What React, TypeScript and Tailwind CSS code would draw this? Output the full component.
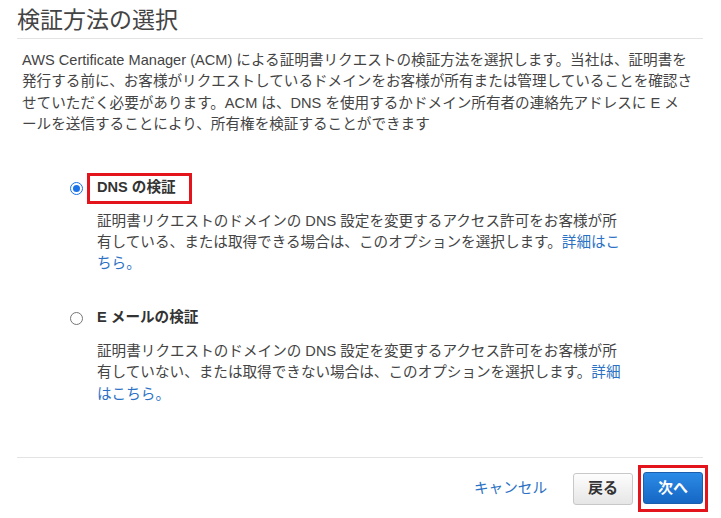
import React from "react";

const FONT = '"Liberation Sans", "Noto Sans CJK JP", sans-serif';

function Radio({ checked }: { checked: boolean }) {
  return checked ? (
    <span className="flex h-[13px] w-[13px] shrink-0 items-center justify-center rounded-full border-[1.5px] border-[#1a73e8] bg-white">
      <span className="h-[7px] w-[7px] rounded-full bg-[#1a73e8]" />
    </span>
  ) : (
    <span className="h-[13px] w-[13px] shrink-0 rounded-full border border-[#767676] bg-white" />
  );
}

export default function App() {
  return (
    <div
      className="flex h-[518px] w-[721px] flex-col overflow-hidden bg-white text-[#444]"
      style={{ fontFamily: FONT }}
    >
      <div className="flex flex-col pl-[17px] pr-[18px] pt-[6px]">
        <h1 className="text-[23px] font-normal leading-[28px] text-[#444]">検証方法の選択</h1>
        <div className="mt-[4px] h-px bg-[#e3e3e3]" />
        <p className="mt-[11px] whitespace-nowrap pl-[5px] text-[14.6px] leading-[21.4px]">
          AWS Certificate Manager (ACM) による証明書リクエストの検証方法を選択します。当社は、証明書を
          <br />
          発行する前に、お客様がリクエストしているドメインをお客様が所有または管理していることを確認さ
          <br />
          せていただく必要があります。ACM は、DNS を使用するかドメイン所有者の連絡先アドレスに E メ
          <br />
          ールを送信することにより、所有権を検証することができます
        </p>

        <div className="ml-[53px] mt-[37px] flex flex-col">
          <div className="flex h-[31px] items-center">
            <Radio checked />
            <div className="ml-[4px] flex h-[31px] w-[105px] items-center border-[3px] border-[#e3141b] pl-[7px]">
              <span className="whitespace-nowrap text-[14.6px] font-bold text-[#333]">DNS の検証</span>
            </div>
          </div>
          <p className="ml-[27px] mt-[7px] whitespace-nowrap text-[14.6px] leading-[21.4px]">
            証明書リクエストのドメインの DNS 設定を変更するアクセス許可をお客様が所
            <br />
            有している、または取得できる場合は、このオプションを選択します。
            <span className="text-[#2b72c4]">詳細はこ</span>
            <br />
            <span className="text-[#2b72c4]">ちら。</span>
          </p>

          <div className="mt-[28px] flex h-[31px] items-center">
            <Radio checked={false} />
            <div className="ml-[4px] flex h-[31px] items-center pl-[10px]">
              <span className="whitespace-nowrap text-[14.6px] font-bold text-[#333]">E メールの検証</span>
            </div>
          </div>
          <p className="ml-[27px] mt-[7px] whitespace-nowrap text-[14.6px] leading-[21.4px]">
            証明書リクエストのドメインの DNS 設定を変更するアクセス許可をお客様が所
            <br />
            有していない、または取得できない場合は、このオプションを選択します。
            <span className="text-[#2b72c4]">詳細</span>
            <br />
            <span className="text-[#2b72c4]">はこちら。</span>
          </p>
        </div>
      </div>

      <div className="ml-[17px] mr-[18px] mt-[52px] h-px bg-[#e3e3e3]" />

      <div className="mt-[7px] flex items-center justify-end pr-[13px]">
        <span className="mr-[26px] text-[14.6px] text-[#2b72c4]">キャンセル</span>
        <button className="flex h-[32px] w-[60px] items-center justify-center rounded-[3px] border border-[#c8c8c8] bg-gradient-to-b from-[#fdfdfd] to-[#e6e6e6] text-[15px] font-bold text-[#333]">
          戻る
        </button>
        <div className="ml-[5px] border-[3px] border-[#e3141b] px-[2px] pb-[5px] pt-[4px]">
          <button className="flex h-[32px] w-[60px] items-center justify-center rounded-[3px] border border-[#1a5eae] bg-gradient-to-b from-[#2b8be6] to-[#1667c4] text-[15px] font-bold text-white">
            次へ
          </button>
        </div>
      </div>
    </div>
  );
}
